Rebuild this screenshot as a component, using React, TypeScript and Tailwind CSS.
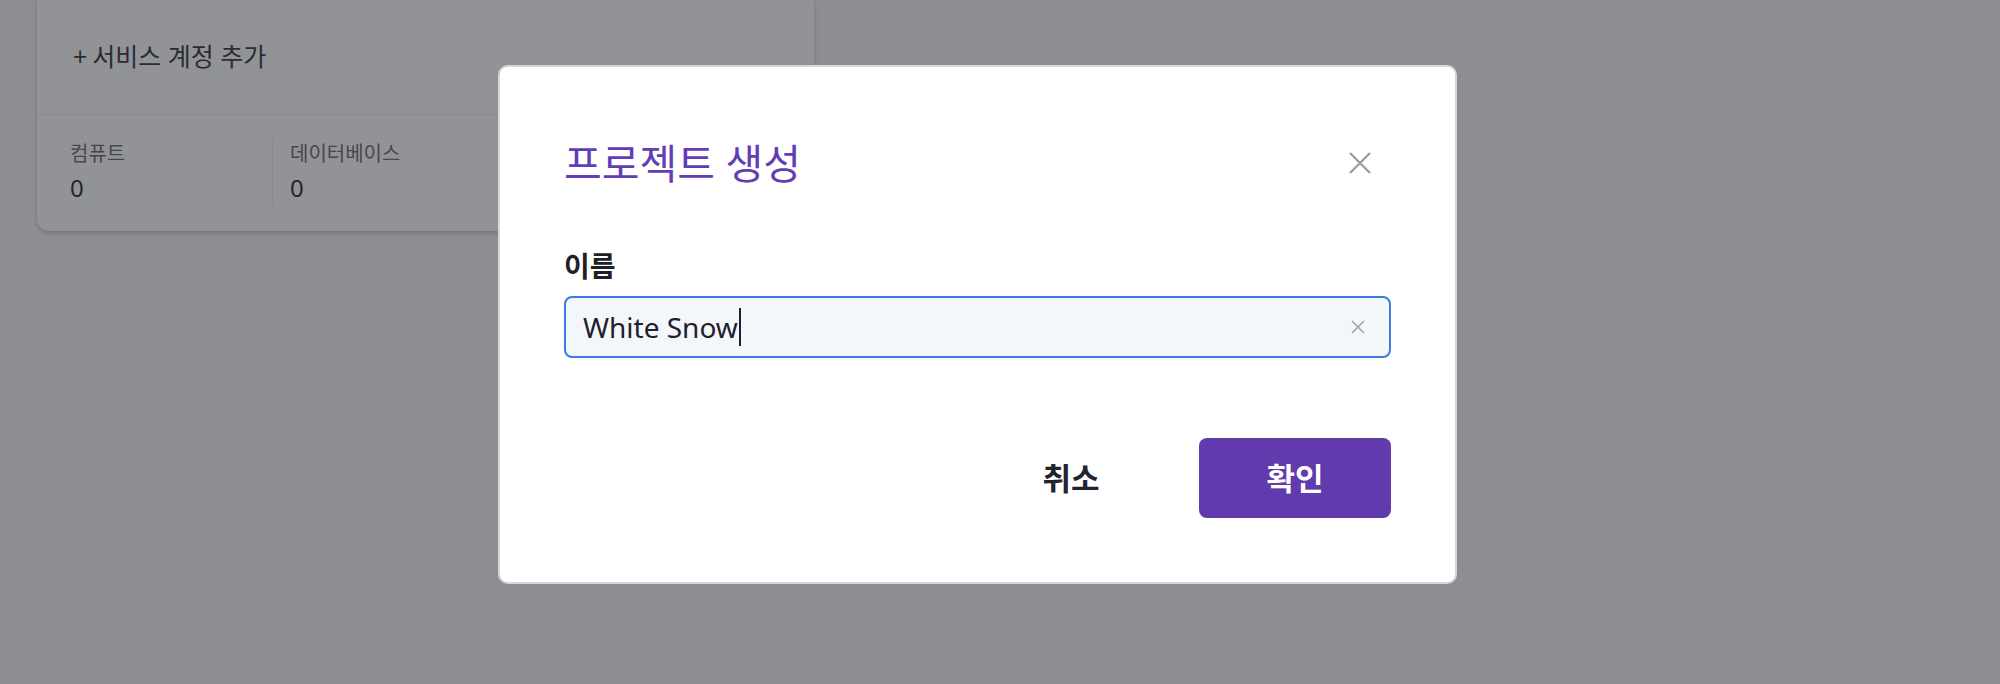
import React from "react";

const FONT = '"Noto Sans", "Noto Sans CJK KR", sans-serif';

export default function App() {
  return (
    <div
      className="relative w-[2000px] h-[684px] overflow-hidden bg-[#8d8e92]"
      style={{ fontFamily: FONT }}
    >
      {/* Background card (dimmed) */}
      <div className="ml-[37px] w-[777px] rounded-b-[12px] bg-[#929397] shadow-[0_2px_4px_rgba(0,0,0,0.18)]">
        <div className="h-[114px] flex items-center pl-[36px] text-[25px] text-[#2b2c33]">
          <span className="mr-[5px]">+</span>
          <span>서비스 계정 추가</span>
        </div>
        <div className="border-t border-[#898a8f] flex py-[24px]">
          <div className="w-[236px] pl-[33px] border-r border-[#8a8b90] flex flex-col">
            <span className="text-[20px] leading-[30px] text-[#46474f]">컴퓨트</span>
            <span className="text-[24px] leading-[38px] text-[#25262e]">0</span>
          </div>
          <div className="w-[236px] pl-[17px] flex flex-col">
            <span className="text-[20px] leading-[30px] text-[#46474f]">데이터베이스</span>
            <span className="text-[24px] leading-[38px] text-[#25262e]">0</span>
          </div>
        </div>
      </div>

      {/* Modal */}
      <div className="absolute left-[498px] top-[65px] w-[959px] border-2 border-[#d6d6db] rounded-[10px] bg-white p-[64px] flex flex-col">
        <div className="h-[64px] flex items-center justify-between pr-[10px]">
          <h2 className="text-[41px] leading-[50px] text-[#643cb4] font-normal">프로젝트 생성</h2>
          <button className="w-[42px] h-[42px] flex items-center justify-center">
            <svg width="22" height="22" viewBox="0 0 22 22" fill="none">
              <path d="M1 1L21 21M21 1L1 21" stroke="#9c9da3" strokeWidth="2.2" />
            </svg>
          </button>
        </div>
        <label className="mt-[54px] text-[28px] leading-[34px] font-bold text-[#1f2029]">이름</label>
        <div className="mt-[13px] h-[62px] border-2 border-[#3b7ddd] rounded-[8px] bg-[#f3f6fb] flex items-center justify-between pl-[17px] pr-[24px]">
          <div className="flex items-center">
            <span className="text-[28px] leading-[40px] text-[#1f2029]">White Snow</span>
            <span className="ml-[1px] w-[2px] h-[38px] bg-[#1f2029]" />
          </div>
          <svg width="14" height="14" viewBox="0 0 14 14" fill="none">
            <path d="M1 1L13 13M13 1L1 13" stroke="#a3a4aa" strokeWidth="1.6" />
          </svg>
        </div>
        <div className="mt-[80px] flex justify-end gap-[32px]">
          <button className="w-[192px] h-[80px] rounded-[8px] text-[31px] font-bold text-[#23232f]">
            취소
          </button>
          <button className="w-[192px] h-[80px] rounded-[8px] bg-[#613bae] text-[31px] font-bold text-white">
            확인
          </button>
        </div>
      </div>
    </div>
  );
}
